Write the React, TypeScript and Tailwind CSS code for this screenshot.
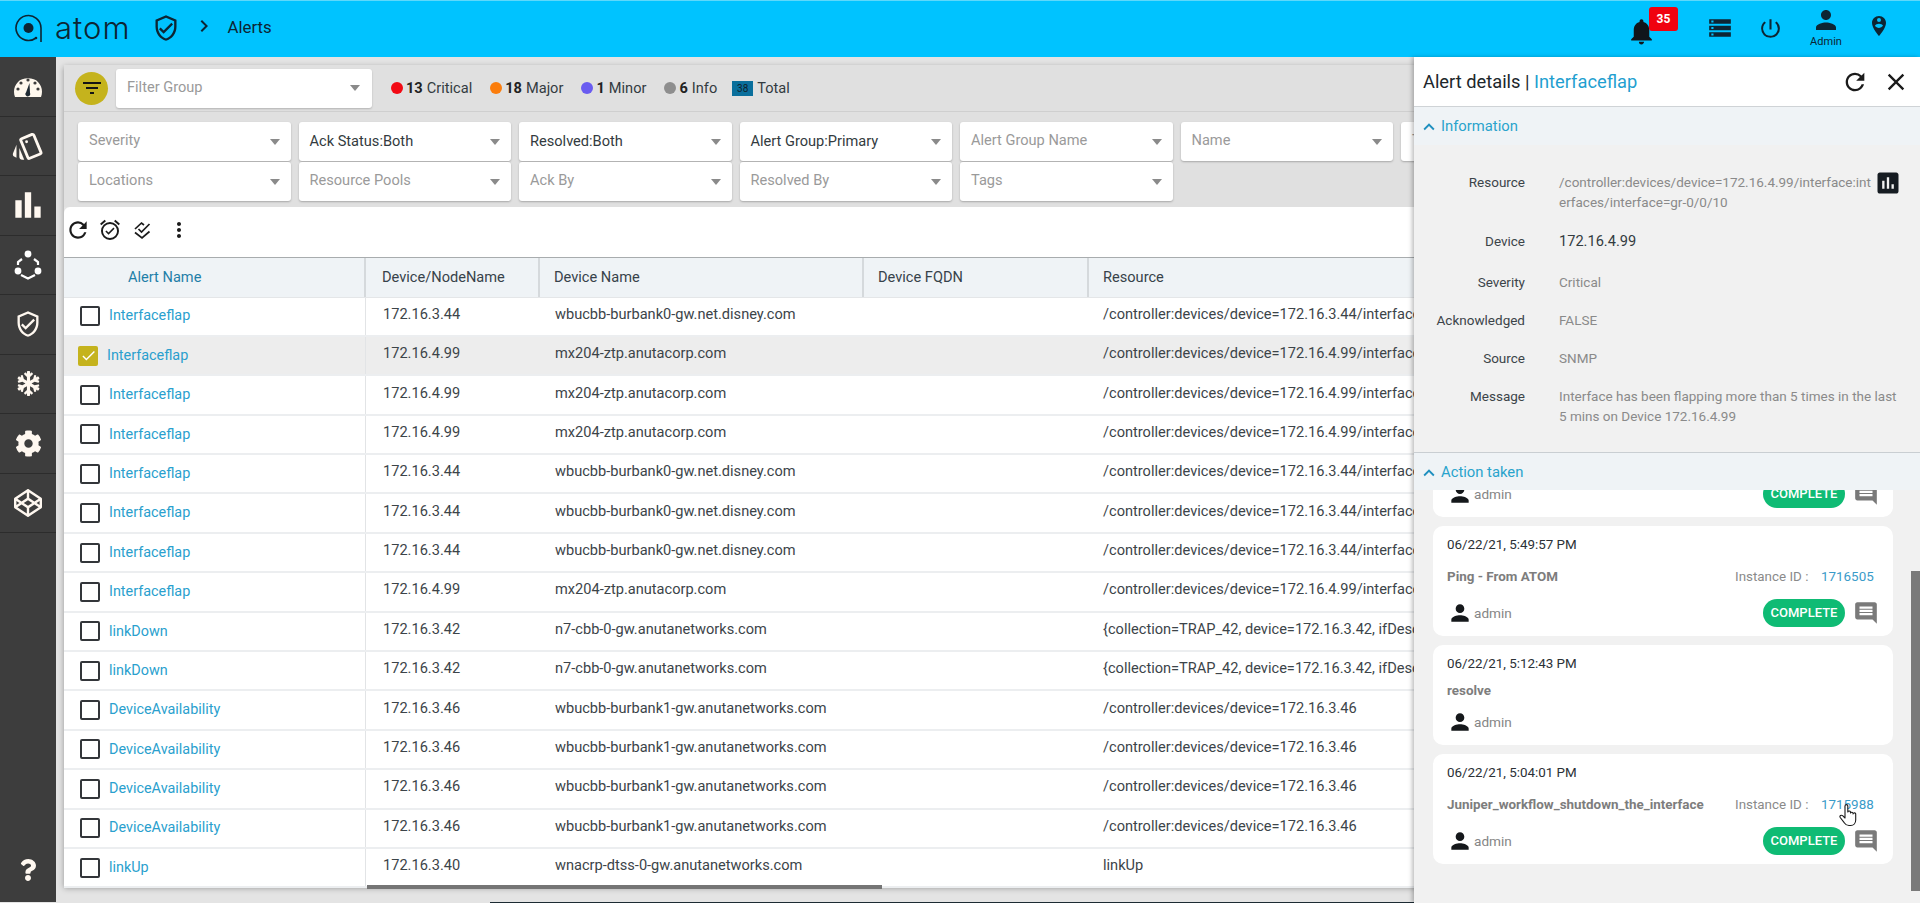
import {
  MdOutlineStyle, MdBarChart, MdOutlineVerifiedUser, MdRefresh, MdOutlineAlarmOn, MdMoreVert, MdNotifications,
  MdStorage, MdPowerSettingsNew, MdPerson, MdPersonPinCircle, MdKeyboardArrowUp, MdClose, MdAssessment,
  MdComment, MdFilterList, MdCheck, MdChevronRight,
} from "react-icons/md";
import { FaSnowflake, FaCog, FaCodepen, FaQuestion } from "react-icons/fa";

const filterRows = [
  [
    { text: "Severity" },
    { text: "Ack Status:Both", set: true },
    { text: "Resolved:Both", set: true },
    { text: "Alert Group:Primary", set: true },
    { text: "Alert Group Name" },
    { text: "Name" },
    { text: "Type" },
  ],
  [
    { text: "Locations" },
    { text: "Resource Pools" },
    { text: "Ack By" },
    { text: "Resolved By" },
    { text: "Tags" },
  ],
];

const disneyRes = "/controller:devices/device=172.16.3.44/interface:interfaces/interface=ge-0/0/1";
const mxRes = "/controller:devices/device=172.16.4.99/interface:interfaces/interface=gr-0/0/10";
const trapRes = "{collection=TRAP_42, device=172.16.3.42, ifDescr=Ethernet1/1}";
const availRes = "/controller:devices/device=172.16.3.46";

const rows = [
  { name: "Interfaceflap", ip: "172.16.3.44", device: "wbucbb-burbank0-gw.net.disney.com", res: disneyRes },
  { name: "Interfaceflap", ip: "172.16.4.99", device: "mx204-ztp.anutacorp.com", res: mxRes, selected: true },
  { name: "Interfaceflap", ip: "172.16.4.99", device: "mx204-ztp.anutacorp.com", res: mxRes },
  { name: "Interfaceflap", ip: "172.16.4.99", device: "mx204-ztp.anutacorp.com", res: mxRes },
  { name: "Interfaceflap", ip: "172.16.3.44", device: "wbucbb-burbank0-gw.net.disney.com", res: disneyRes },
  { name: "Interfaceflap", ip: "172.16.3.44", device: "wbucbb-burbank0-gw.net.disney.com", res: disneyRes },
  { name: "Interfaceflap", ip: "172.16.3.44", device: "wbucbb-burbank0-gw.net.disney.com", res: disneyRes },
  { name: "Interfaceflap", ip: "172.16.4.99", device: "mx204-ztp.anutacorp.com", res: mxRes },
  { name: "linkDown", ip: "172.16.3.42", device: "n7-cbb-0-gw.anutanetworks.com", res: trapRes },
  { name: "linkDown", ip: "172.16.3.42", device: "n7-cbb-0-gw.anutanetworks.com", res: trapRes },
  { name: "DeviceAvailability", ip: "172.16.3.46", device: "wbucbb-burbank1-gw.anutanetworks.com", res: availRes },
  { name: "DeviceAvailability", ip: "172.16.3.46", device: "wbucbb-burbank1-gw.anutanetworks.com", res: availRes },
  { name: "DeviceAvailability", ip: "172.16.3.46", device: "wbucbb-burbank1-gw.anutanetworks.com", res: availRes },
  { name: "DeviceAvailability", ip: "172.16.3.46", device: "wbucbb-burbank1-gw.anutanetworks.com", res: availRes },
  { name: "linkUp", ip: "172.16.3.40", device: "wnacrp-dtss-0-gw.anutanetworks.com", res: "linkUp" },
];

const actions = [
  { date: "06/22/21, 6:02:11 PM", title: "Ping - From ATOM", id: "1716611", complete: true, clip: true },
  { date: "06/22/21, 5:49:57 PM", title: "Ping - From ATOM", id: "1716505", complete: true },
  { date: "06/22/21, 5:12:43 PM", title: "resolve" },
  { date: "06/22/21, 5:04:01 PM", title: "Juniper_workflow_shutdown_the_interface", id: "1715988", complete: true },
];

function Caret() {
  return <span className="w-0 h-0 border-x-[5px] border-x-transparent border-t-[6px] border-t-[#8a8a8a]" />;
}

function Select({ text, set }: { text: string; set?: boolean }) {
  return (
    <div className="h-[39px] bg-white rounded-[3px] shadow-[0_1px_2px_rgba(0,0,0,0.25)] flex items-center justify-between pl-[11px] pr-[11px]">
      <span className={set ? "text-[#333b40]" : "text-[#9a9a9a] -mt-[2px]"}>{text}</span>
      <Caret />
    </div>
  );
}

function Gauge() {
  return (
    <svg width="28" height="21" viewBox="0 0 28 21">
      <path d="M1 21 C-1 16 0 10 4 6 C8 1 20 1 24 6 C28 10 29 16 27 21 Z" fill="#fff8ee" />
      <circle cx="14" cy="4" r="1.6" fill="#3d3d3d" />
      <circle cx="7" cy="7" r="1.6" fill="#3d3d3d" />
      <circle cx="21" cy="7" r="1.6" fill="#3d3d3d" />
      <circle cx="4" cy="13" r="1.6" fill="#3d3d3d" />
      <circle cx="24" cy="13" r="1.6" fill="#3d3d3d" />
      <path d="M15.5 7 L16 17 A2.4 2.4 0 1 1 12 16.4 Z" fill="#1f2a33" />
    </svg>
  );
}

function Nodes() {
  return (
    <svg width="28" height="30" viewBox="0 0 28 30" fill="none" stroke="#fff" strokeWidth="2.2">
      <path d="M8 9 L4 12 V15 M20 9 L24 12 V15 M7 25 L14 28.5 L21 25" />
      <circle cx="14" cy="4" r="3.4" fill="#fff" stroke="none" />
      <circle cx="4" cy="21" r="3.4" fill="#fff" stroke="none" />
      <circle cx="24" cy="21" r="3.4" fill="#fff" stroke="none" />
    </svg>
  );
}

function Logo() {
  return (
    <svg width="28" height="30" viewBox="0 0 28 30" fill="none" stroke="#0d2533" strokeWidth="1.6">
      <path d="M21 24 A12.5 12.5 0 1 1 26 14 V28" />
      <circle cx="13.5" cy="14" r="5" fill="#0d2533" stroke="none" />
      <circle cx="21" cy="24" r="1.3" fill="#0d2533" stroke="none" />
    </svg>
  );
}

function LayersCheck() {
  return (
    <svg width="20" height="20" viewBox="0 0 20 20" fill="none" stroke="#1b1b1b" strokeWidth="1.7">
      <path d="M3 9 L9.5 3 L12 5" />
      <path d="M6.5 9 L9.5 12 L17.5 4" />
      <path d="M3 12.5 L10 18 L17.5 11.5" />
    </svg>
  );
}

function Hand() {
  return (
    <svg width="18" height="24" viewBox="0 0 18 24" fill="#fff" stroke="#1a1a1a" strokeWidth="1.1" strokeLinejoin="round">
      <path d="M6 12 V3 a1.4 1.4 0 0 1 2.8 0 V9 a1.4 1.4 0 0 1 2.7 0 V10 a1.4 1.4 0 0 1 2.6 .3 V11 a1.3 1.3 0 0 1 2.6 .4 V17 c0 3 -2 5.5 -5 5.5 H10 c-2.4 0 -3.6 -1 -4.8 -2.8 L1.2 14.5 c-1 -1.6 1 -3 2.4 -1.8 L6 15 Z" />
    </svg>
  );
}

function Dot({ color, count, label }: { color: string; count: string; label: string }) {
  return (
    <div className="flex items-center">
      <span className={`w-3 h-3 rounded-full ${color}`} />
      <span className="ml-[3px] font-bold text-[#222]">{count}</span>
      <span className="ml-[4px] text-[#333b40]">{label}</span>
    </div>
  );
}

function ActionCard({ a }: { a: (typeof actions)[number] }) {
  const hasId = !!a.id;
  return (
    <div className={`bg-white rounded-[10px] pl-[14px] pr-[14px] pt-[10px] shrink-0 text-[13.4px] ${a.clip ? "-mt-[83px]" : ""}`}>
      <div className="leading-[18px] text-[#2b3136]">{a.date}</div>
      <div className={`flex items-center leading-[18px] ${hasId ? "mt-[14px]" : "mt-[9px]"}`}>
        <span className="font-bold text-[#7d7d7d] flex-1 text-[13.4px]">{a.title}</span>
        {hasId && <span className="text-[#8a8a8a] w-[86px]">Instance ID :</span>}
        {hasId && <span className="text-[#3a9bc9] w-[58px]">{a.id}</span>}
      </div>
      <div className={`flex items-center ${hasId ? "h-[28px] mt-[13px] mb-[9px]" : "h-[20px] mt-[12px] mb-[13px]"}`}>
        <MdPerson size={26} className="text-[#15181b] shrink-0" />
        <span className="ml-[1px] text-[13.6px] text-[#858585] flex-1">admin</span>
        {a.complete && (
          <>
            <span className="w-[82px] h-[28px] rounded-full bg-[#0fbb74] text-white text-[13px] font-medium flex items-center justify-center">COMPLETE</span>
            <MdComment size={26} className="ml-[8px] text-[#7a7a7a]" />
          </>
        )}
      </div>
    </div>
  );
}

const sideItems = [
  <Gauge />,
  <MdOutlineStyle size={34} />,
  <MdBarChart size={38} />,
  <Nodes />,
  <MdOutlineVerifiedUser size={28} />,
  <FaSnowflake size={25} />,
  <FaCog size={27} />,
  <FaCodepen size={28} />,
];

export default function App() {
  return (
    <div className="relative w-[1920px] h-[903px] overflow-hidden flex flex-col bg-[#e4e4e4] font-[family-name:Roboto,sans-serif] text-[14.6px]">
      {/* top bar */}
      <header className="h-[57px] shrink-0 bg-[#00c3ff] border-t border-t-[#5ed8fb] flex items-center text-[#0d2533]">
        <div className="ml-[15px]"><Logo /></div>
        <span className="ml-[12px] w-[96.5px] text-[31px] tracking-[1px] font-light font-[family-name:Inter,sans-serif] leading-none -mt-1">atom</span>
        <MdOutlineVerifiedUser size={28} className="-mt-[2px]" />
        <MdChevronRight size={24} className="ml-[12px] -mt-[6px]" />
        <span className="ml-[12px] text-[16.8px] -mt-[2px]">Alerts</span>
        <div className="ml-auto mr-[29px] flex items-center -mt-[2px]">
          <div className="relative w-[50px] h-[40px]">
            <MdNotifications size={31} className="absolute -left-[2px] top-[8px] text-[#10161b]" />
            <span className="absolute left-[21px] -top-[1px] w-[29px] h-[24px] rounded-[3px] bg-[#f0020f] text-white text-[12px] font-bold flex items-center justify-center">35</span>
          </div>
          <MdStorage size={26} className="ml-[29px] text-[#0d2533]" />
          <MdPowerSettingsNew size={25} className="ml-[25px] text-[#0d2533]" />
          <div className="ml-[27px] w-[32px] flex flex-col items-center -mt-[1px]">
            <MdPerson size={30} className="-my-[2px]" />
            <span className="text-[11px] leading-[13px] mt-[2px]">Admin</span>
          </div>
          <MdPersonPinCircle size={24} className="ml-[25px] -mt-[5px]" />
        </div>
      </header>

      <div className="flex-1 min-h-0 flex">
        {/* side nav */}
        <nav className="w-[56px] shrink-0 bg-[#3d3d3d] flex flex-col text-[#fff8f0]">
          {sideItems.map((icon, i) => (
            <div key={i} className="h-[59.5px] shrink-0 border-b border-b-[#2c2c2c] flex items-center justify-center">{icon}</div>
          ))}
          <div className="mt-auto mb-[21px] flex justify-center"><FaQuestion size={22} /></div>
        </nav>

        <main className="flex-1 min-w-0 pl-[8px] pt-[8px] overflow-hidden">
          <div className="w-[1900px] shadow-[0_2px_6px_rgba(0,0,0,0.35)]">
            {/* filter group row */}
            <div className="h-[47px] bg-[#e0e0e0] border-b border-b-[#cfcfcf] flex items-center pl-[11px]">
              <span className="w-[33px] h-[33px] rounded-full bg-[#c5b31d] flex items-center justify-center text-[#151515]">
                <MdFilterList size={24} />
              </span>
              <div className="ml-[8px] w-[256px] h-[39px] bg-white rounded-[3px] shadow-[0_1px_2px_rgba(0,0,0,0.2)] flex items-center justify-between pl-[11px] pr-[12px]">
                <span className="text-[#9a9a9a] -mt-[1px]">Filter Group</span>
                <Caret />
              </div>
              <div className="ml-[19px] pt-px flex items-center gap-[18px]">
                <Dot color="bg-[#f20a14]" count="13" label="Critical" />
                <Dot color="bg-[#fb7d0c]" count="18" label="Major" />
                <Dot color="bg-[#6a5cf0]" count="1" label="Minor" />
                <Dot color="bg-[#8e8e8e]" count="6" label="Info" />
                <div className="flex items-center -ml-[3px]">
                  <span className="w-[21px] h-[15px] bg-[#0a6f9c] text-[10px] text-[#10212b] flex items-center justify-center">38</span>
                  <span className="ml-[4px] text-[#333b40]">Total</span>
                </div>
              </div>
            </div>

            {/* filters */}
            <div className="h-[95px] bg-[#e0e0e0] pl-[14px] pt-[10px] flex flex-col gap-[1px]">
              {filterRows.map((r, i) => (
                <div key={i} className="grid grid-cols-[repeat(7,212.5px)] gap-x-[8px]">
                  {r.map((f) => <Select key={f.text} text={f.text} set={f.set} />)}
                </div>
              ))}
            </div>

            {/* toolbar */}
            <div className="h-[50px] bg-white rounded-tl-[6px] flex items-center pb-[5px] pl-[1px] text-[#1b1b1b]">
              <MdRefresh size={26} />
              <MdOutlineAlarmOn size={24} className="ml-[7px]" />
              <span className="ml-[10px]"><LayersCheck /></span>
              <MdMoreVert size={24} className="ml-[15px]" />
            </div>

            {/* table */}
            <div className="grid grid-cols-[302px_174px_324px_225px_325px] h-[40.5px] bg-[#eff3f6] border-t border-t-[#a8acae] border-b border-b-[#e4e6e8] text-[#37424a]">
              <div className="pl-[64px] pt-px flex items-center border-r-2 border-r-[#d5d9dc] text-[#1f7fa8]">Alert Name</div>
              <div className="pl-[16px] pt-px flex items-center border-r-2 border-r-[#d5d9dc]">Device/NodeName</div>
              <div className="pl-[14px] pt-px flex items-center border-r-2 border-r-[#d5d9dc]">Device Name</div>
              <div className="pl-[14px] pt-px flex items-center border-r-2 border-r-[#d5d9dc]">Device FQDN</div>
              <div className="pl-[14px] pt-px flex items-center">Resource</div>
            </div>
            <div className="bg-white">
              {rows.map((r, i) => (
                <div key={i} className={`grid grid-cols-[302px_174px_324px_225px_325px] h-[39.4px] border-b-2 border-b-[#eceef0] text-[#3c4449] ${r.selected ? "bg-[#ededed]" : ""}`}>
                  <div className={`flex items-center border-r border-r-[#e2e4e6] ${r.selected ? "pl-[14px]" : "pl-[16px]"}`}>
                    {r.selected ? (
                      <span className="w-[20px] h-[20px] rounded-[2px] bg-[#c5b31d] flex items-center justify-center text-white"><MdCheck size={17} /></span>
                    ) : (
                      <span className="w-[20px] h-[20px] rounded-[2px] border-2 border-[#33363a]" />
                    )}
                    <span className="ml-[9px] text-[14.4px] text-[#2a9fce]">{r.name}</span>
                  </div>
                  <div className="pl-[17px] flex items-center pb-[3px]">{r.ip}</div>
                  <div className="pl-[15px] flex items-center pb-[3px]">{r.device}</div>
                  <div />
                  <div className="pl-[14px] flex items-center pb-[3px] whitespace-nowrap overflow-hidden">{r.res}</div>
                </div>
              ))}
              <div className="h-[1px] -mt-[3px]">
                <div className="ml-[303px] w-[515px] h-[4px] bg-[#757575] relative" />
              </div>
            </div>
          </div>
        </main>
      </div>
      <div className="h-px shrink-0 ml-[490px] bg-[#1c2b33]" />

      {/* details panel, slides over the table */}
      <aside className="absolute left-[1414px] right-0 top-[57px] bottom-0 flex flex-col bg-[#f1f1f1] shadow-[-2px_0_4px_rgba(0,0,0,0.25)]">
        <div className="h-[50px] shrink-0 bg-white border-b border-b-[#cfd3d6] flex items-center pl-[9px] pr-[10px]">
          <span className="text-[18.3px] text-[#20262b]">Alert details | <span className="text-[#1f9fd0]">Interfaceflap</span></span>
          <MdRefresh size={28} className="ml-auto text-[#1b1b1b]" />
          <MdClose size={28} className="ml-[13px] text-[#1b1b1b]" />
        </div>
        <div className="h-[38px] shrink-0 bg-[#eff3f6] flex items-center pt-[1px] pl-[4px] text-[#29a3cc] text-[14.8px]">
          <MdKeyboardArrowUp size={22} className="text-[#1f8fbf]" />
          <span className="ml-[1px]">Information</span>
        </div>
        <div className="h-[308px] shrink-0 pt-[27px] border-b border-b-[#c9ced2] grid grid-cols-[111px_1fr] gap-x-[34px] content-start text-[13.5px] leading-[20px] text-[#8a8a8a]">
          <div className="text-right text-[#3c4449]">Resource</div>
          <div className="flex">
            <span className="w-[314px] break-all">/controller:devices/device=172.16.4.99/interface:interfaces/interface=gr-0/0/10</span>
            <MdAssessment size={28} className="ml-[1px] -mt-[3px] text-[#161c22]" />
          </div>
          <div className="text-right text-[#3c4449] mt-[19px]">Device</div>
          <div className="mt-[19px] text-[14.6px] text-[#333b40]">172.16.4.99</div>
          <div className="text-right text-[#3c4449] mt-[21px]">Severity</div>
          <div className="mt-[21px]">Critical</div>
          <div className="text-right text-[#3c4449] mt-[18px]">Acknowledged</div>
          <div className="mt-[18px]">FALSE</div>
          <div className="text-right text-[#3c4449] mt-[18px]">Source</div>
          <div className="mt-[18px]">SNMP</div>
          <div className="text-right text-[#3c4449] mt-[18px]">Message</div>
          <div className="mt-[18px] w-[344px]">Interface has been flapping more than 5 times in the last 5 mins on Device 172.16.4.99</div>
        </div>
        <div className="h-[37px] shrink-0 bg-[#eff3f6] flex items-center pt-[2px] pl-[4px] text-[#29a3cc] text-[14.8px] relative z-10">
          <MdKeyboardArrowUp size={22} className="text-[#1f8fbf]" />
          <span className="ml-[1px]">Action taken</span>
        </div>
        <div className="relative flex-1 min-h-0 overflow-hidden">
          <div className="flex flex-col gap-[9px] ml-[19px] w-[460px]">
            {actions.map((a) => <ActionCard key={a.date} a={a} />)}
          </div>
          <div className="absolute right-0 top-[81px] w-[9px] h-[320px] bg-[#7a7a7a]" />
          <div className="absolute left-[425px] top-[313px]"><Hand /></div>
        </div>
      </aside>
    </div>
  );
}
